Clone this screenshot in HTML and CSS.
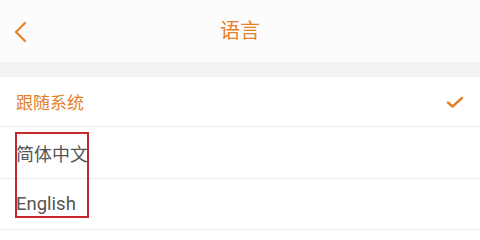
FILE: index.html
```html
<!DOCTYPE html>
<html lang="zh">
<head>
<meta charset="utf-8">
<link rel="stylesheet" href="styles.css">
</head>
<body>
<div class="page">
  <header class="topbar">
    <svg class="back" width="14" height="22" viewBox="0 0 14 22"><path d="M12 2 L3 11 L12 20" fill="none" stroke="#e2812a" stroke-width="2.2" stroke-linecap="round" stroke-linejoin="round"/></svg>
    <h1 class="title">语言</h1>
  </header>
  <div class="band"></div>
  <ul class="list">
    <li class="row active"><span>跟随系统</span>
      <svg class="check" width="18" height="14" viewBox="0 0 18 14"><path d="M2 7.5 L6.5 11.5 L16 3" fill="none" stroke="#e2812a" stroke-width="2.4" stroke-linecap="round" stroke-linejoin="round"/></svg>
    </li>
    <li class="row mid"><span>简体中文</span></li>
    <li class="row latin"><span>English</span></li>
  </ul>
  <div class="mark"></div>
</div>
</body>
</html>
```
FILE: styles.css
```css
html, body { margin: 0; padding: 0; background: #ffffff; }
body { font-family: Roboto, "Noto Sans CJK SC", sans-serif; }
.page { position: relative; width: 480px; height: 230px; overflow: hidden; }
.topbar { height: 62px; background: #fcfcfc; display: flex; align-items: center; justify-content: center; position: relative; }
.back { position: absolute; left: 13px; top: 21px; }
.title { margin: 0; font-size: 20px; font-weight: normal; color: #e2812a; line-height: 1; }
.band { height: 15px; background: #f2f2f2; }
.list { list-style: none; margin: 0; padding: 0; }
.row { height: 50px; border-bottom: 1px solid #ececec; display: flex; align-items: center; justify-content: space-between; padding: 0 16px; font-size: 18px; color: #555555; }
.row.active { color: #e2812a; font-size: 17px; height: 49px; }
.row.mid { height: 51px; }
.row.latin { font-size: 18.5px; }
.check { margin-right: 0; }
.mark { position: absolute; box-sizing: border-box; left: 15px; top: 132px; width: 74px; height: 86px; border: 2px solid #c4282c; }
```
